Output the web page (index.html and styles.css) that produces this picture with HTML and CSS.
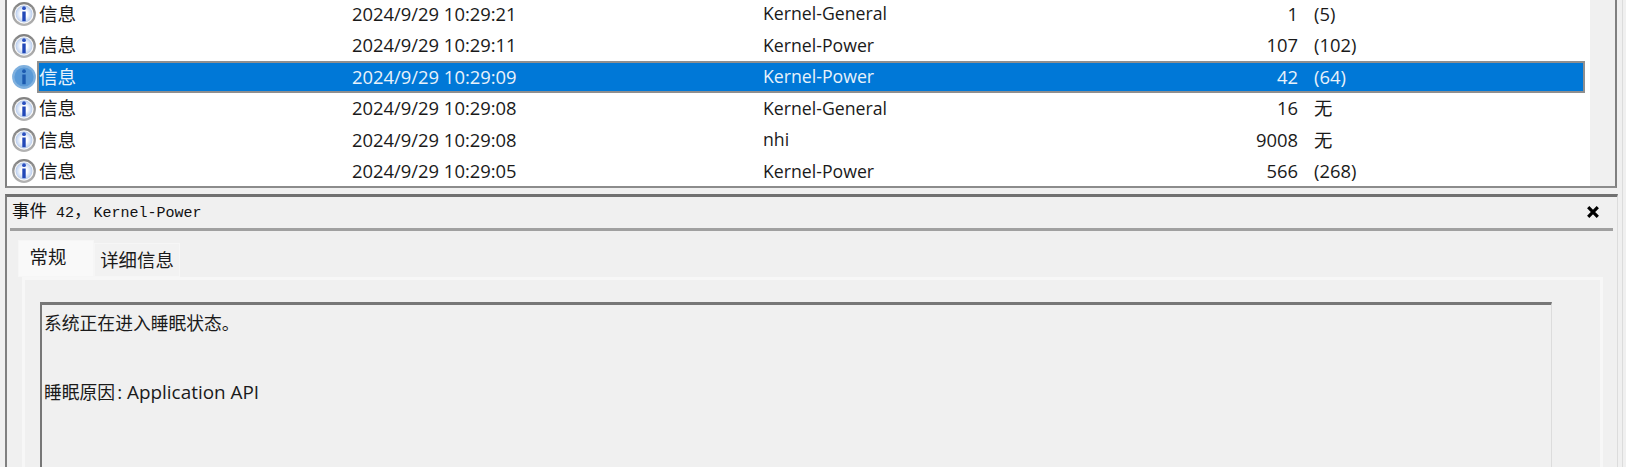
FILE: index.html
```html
<!DOCTYPE html>
<html lang="zh">
<head>
<meta charset="utf-8">
<title>事件查看器</title>
<link rel="stylesheet" href="styles.css">
</head>
<body>
<svg class="defs" width="0" height="0" aria-hidden="true">
  <defs>
    <linearGradient id="ring" x1="0" y1="0" x2="0" y2="1">
      <stop offset="0" stop-color="#808080"/>
      <stop offset="1" stop-color="#b4b4b4"/>
    </linearGradient>
    <radialGradient id="face" cx="0.5" cy="0.5" r="0.55">
      <stop offset="0.35" stop-color="#ffffff"/>
      <stop offset="0.8" stop-color="#c8d8f2"/>
      <stop offset="1" stop-color="#9db8e4"/>
    </radialGradient>
    <symbol id="info" viewBox="0 0 24 24">
      <circle cx="12" cy="12" r="11.9" fill="url(#ring)"/>
      <circle cx="12" cy="12" r="9.7" fill="#f8f8f8"/>
      <circle cx="12" cy="12" r="8.4" fill="url(#face)"/>
      <circle cx="12" cy="6.2" r="1.9" fill="#2a50c0"/>
      <path d="M10.3 9.6h3.4v9.6h-3.4z" fill="#2248b8"/>
    </symbol>
    <symbol id="info-selected" viewBox="0 0 24 24">
      <circle cx="12" cy="12" r="11.9" fill="#7fb0de"/>
      <circle cx="12" cy="12" r="9.6" fill="#5a9ad8"/>
      <circle cx="12" cy="6.2" r="1.9" fill="#1c5bb0"/>
      <path d="M10.3 9.6h3.4v9.6h-3.4z" fill="#1c5bb0"/>
    </symbol>
  </defs>
</svg>
<main class="window">
  <section class="list">
    <div class="rows">
      <div class="row">
        <svg class="ico"><use href="#info"/></svg>
        <div class="cells"><span class="level">信息</span><span>2024/9/29 10:29:21</span><span class="source">Kernel-General</span><span class="num">1</span><span class="cat">(5)</span></div>
      </div>
      <div class="row">
        <svg class="ico"><use href="#info"/></svg>
        <div class="cells"><span class="level">信息</span><span>2024/9/29 10:29:11</span><span class="source">Kernel-Power</span><span class="num">107</span><span class="cat">(102)</span></div>
      </div>
      <div class="row">
        <svg class="ico"><use href="#info-selected"/></svg>
        <div class="cells selected"><span class="level">信息</span><span>2024/9/29 10:29:09</span><span class="source">Kernel-Power</span><span class="num">42</span><span class="cat">(64)</span></div>
      </div>
      <div class="row">
        <svg class="ico"><use href="#info"/></svg>
        <div class="cells"><span class="level">信息</span><span>2024/9/29 10:29:08</span><span class="source">Kernel-General</span><span class="num">16</span><span class="cat">无</span></div>
      </div>
      <div class="row">
        <svg class="ico"><use href="#info"/></svg>
        <div class="cells"><span class="level">信息</span><span>2024/9/29 10:29:08</span><span class="source">nhi</span><span class="num">9008</span><span class="cat">无</span></div>
      </div>
      <div class="row">
        <svg class="ico"><use href="#info"/></svg>
        <div class="cells"><span class="level">信息</span><span>2024/9/29 10:29:05</span><span class="source">Kernel-Power</span><span class="num">566</span><span class="cat">(268)</span></div>
      </div>
    </div>
    <div class="scrollbar"></div>
  </section>
  <section class="detail">
    <header class="detail-head">
      <h1 class="detail-title"><span class="title-cjk">事件</span> 42<span class="title-cjk title-comma">，</span>Kernel-Power</h1>
      <svg class="close" viewBox="0 0 14 14" aria-label="关闭"><path d="M2.2 2.2l9.6 9.6M11.8 2.2l-9.6 9.6" stroke="#000" stroke-width="3.2" fill="none"/></svg>
    </header>
    <nav class="tabs">
      <div class="tab active">常规</div>
      <div class="tab">详细信息</div>
    </nav>
    <div class="tab-panel">
      <div class="message">
        <p>系统正在进入睡眠状态。</p>
        <p>睡眠原因<span class="latin">: Application API</span></p>
      </div>
    </div>
  </section>
</main>
</body>
</html>
```
FILE: styles.css
```css
html, body {
  margin: 0;
  padding: 0;
  height: 467px;
  overflow: hidden;
  background: #f0f0f0;
}
body {
  font-family: "Open Sans", "Noto Sans CJK SC", sans-serif;
  font-size: 18.4px;
  color: #1a1a1a;
}
.defs {
  display: block;
  height: 0;
}
.window {
  width: 1623px;
  height: 467px;
  display: flex;
  flex-direction: column;
  padding-left: 5px;
  padding-right: 5px;
  border-right: 1px solid #dcdcdc;
  box-sizing: border-box;
}
.list {
  height: 188px;
  flex: none;
  display: flex;
  box-sizing: border-box;
  background: #fff;
  border-left: 2px solid #808080;
  border-right: 2px solid #808080;
  border-bottom: 2px solid #8c8c8c;
  overflow: hidden;
}
.rows {
  flex: 1;
  margin-top: -1.5px;
  padding-left: 5px;
  padding-right: 5px;
}
.scrollbar {
  width: 25px;
  flex: none;
  background: #f0f0f0;
}
.row {
  height: 31.45px;
  display: flex;
  align-items: center;
}
.ico {
  width: 24px;
  height: 24px;
  flex: none;
  margin-right: 1px;
}
.cells {
  flex: 1;
  height: 100%;
  box-sizing: border-box;
  display: grid;
  grid-template-columns: 313px 411px 300px 235px 1fr;
  align-items: center;
  padding-left: 2px;
  line-height: 1;
}
.level {
  font-size: 18.6px;
}
.source {
  font-size: 17.7px;
}
.num {
  text-align: right;
}
.cat {
  padding-left: 16px;
}
.selected {
  background: #0078d7;
  color: #e8f2fb;
  outline: 2px solid #8f8f8f;
  outline-offset: -2px;
}
.detail {
  flex: 1;
  margin-top: 6px;
  margin-right: -1px;
  border-top: 3px solid #707070;
  border-left: 2px solid #808080;
  border-right: 1px solid #dcdcdc;
  display: flex;
  flex-direction: column;
  min-height: 0;
}
.detail-head {
  height: 34px;
  flex: none;
  display: flex;
  align-items: center;
  justify-content: space-between;
  margin: 0 4px 0 3px;
  border-bottom: 3px solid #a0a0a0;
  box-sizing: border-box;
  padding: 0 13px 4px 2px;
}
.detail-title {
  margin: 0;
  font: 400 15px/1 "Liberation Mono", "Noto Sans CJK SC", monospace;
  color: #111;
  white-space: pre;
}
.title-cjk {
  font-family: "Noto Sans CJK SC", sans-serif;
  font-size: 17.5px;
}
.title-comma {
  margin-right: 2px;
}
.close {
  width: 14px;
  height: 14px;
  margin-top: 2px;
}
.tabs {
  display: flex;
  align-items: flex-end;
  height: 46px;
  flex: none;
  padding-left: 11px;
  box-sizing: border-box;
}
.tab {
  height: 34px;
  width: 86px;
  display: flex;
  align-items: center;
  justify-content: center;
  padding-bottom: 2px;
  background: #f2f2f2;
  border: 1px solid #f6f6f6;
  box-sizing: border-box;
  font-size: 18.4px;
}
.tab.active {
  width: 76px;
  height: 37px;
  padding-bottom: 5px;
  padding-right: 16px;
  background: #f9f9f9;
}
.tab-panel {
  flex: 1;
  margin-left: 15px;
  margin-right: 14px;
  padding: 22px 48px 0 15px;
  background: #f0f0f0;
  border: 3px solid #f7f7f7;
  border-bottom: none;
  min-height: 0;
}
.message {
  height: 100%;
  box-sizing: border-box;
  border-top: 3px solid #777;
  border-left: 2px solid #777;
  border-right: 1px solid #dcdcdc;
  padding: 6px 2px;
  font-size: 17.8px;
}
.latin {
  margin-left: 2px;
  font-size: 18.9px;
}
.message p {
  margin: 0 0 45px;
  line-height: 24px;
}
```
